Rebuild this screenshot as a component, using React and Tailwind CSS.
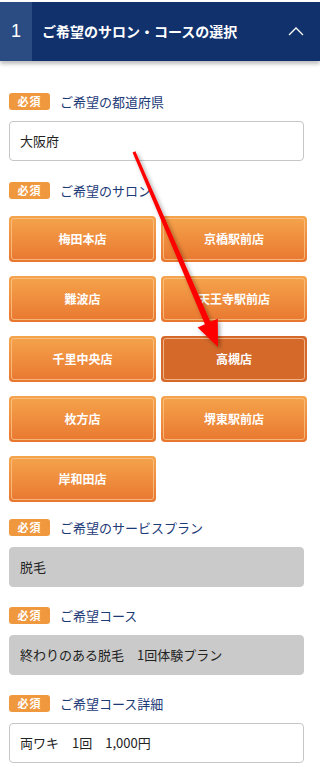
const salons = ['梅田本店', '京橋駅前店', '難波店', '天王寺駅前店', '千里中央店', '高槻店', '枚方店', '堺東駅前店', '岸和田店'];

function Label({ children }) {
  return (
    <div className="flex items-center h-[17px] mb-[11px]">
      <span className="w-[41px] h-[17px] rounded-[3px] bg-[#f0983e] text-white text-[11px] font-bold flex items-center justify-center tracking-[1px]">必須</span>
      <span className="ml-[10px] text-[13px] text-[#1d3a78]">{children}</span>
    </div>
  );
}

function Field({ value, gray }) {
  return (
    <div className={`h-[40px] w-[295px] rounded-[4px] border flex items-center px-[10px] text-[13px] text-[#222] ${gray ? 'bg-[#cacaca] border-[#cacaca]' : 'bg-white border-[#c6c6c6]'}`}>
      {value}
    </div>
  );
}

export default function App() {
  return (
    <div className="relative w-[320px] h-[767px] bg-white overflow-hidden" style={{ fontFamily: '"Noto Sans CJK JP", "Noto Sans", sans-serif' }}>
      <div className="mt-[2px] h-[59px] flex bg-[#11316d] shadow-[0_3px_4px_rgba(0,0,0,0.25)]">
        <div className="w-[32px] bg-[#2b4c83] flex items-center justify-center text-white text-[18px] font-['Liberation_Sans']">1</div>
        <div className="flex-1 flex items-center pl-[10px] text-white text-[14px] font-bold">ご希望のサロン・コースの選択</div>
        <div className="w-[24px] flex items-center mr-[8px]">
          <svg width="16" height="9" viewBox="0 0 16 9" fill="none">
            <polyline points="1,8 8,1 15,8" stroke="#fff" strokeWidth="1.3" />
          </svg>
        </div>
      </div>

      <div className="pl-[9px] pt-[32px]">
        <Label>ご希望の都道府県</Label>
        <Field value="大阪府" />

        <div className="mt-[21px]">
          <Label>ご希望のサロン</Label>
        </div>
        <div className="mt-[17px] grid grid-cols-[147px_146px] gap-x-[5px] gap-y-[14px]">
          {salons.map((s) => {
            const active = s === '高槻店';
            return (
              <div
                key={s}
                className={`h-[46px] rounded-[4px] p-[2px] ${active ? 'bg-[#d4692a]' : 'bg-gradient-to-b from-[#f5a44c] to-[#e8772f]'}`}
              >
                <div className={`h-full rounded-[3px] border flex items-center justify-center text-white text-[12px] font-bold ${active ? 'border-[#f0b48a]' : 'border-[#f8c48c]/80'}`}>
                  {s}
                </div>
              </div>
            );
          })}
        </div>

        <div className="mt-[17px]">
          <Label>ご希望のサービスプラン</Label>
        </div>
        <Field value="脱毛" gray />

        <div className="mt-[20px]">
          <Label>ご希望コース</Label>
        </div>
        <Field value="終わりのある脱毛　1回体験プラン" gray />

        <div className="mt-[20px]">
          <Label>ご希望コース詳細</Label>
        </div>
        <Field value="両ワキ　1回　1,000円" />
      </div>

      <svg className="absolute left-0 top-0 pointer-events-none" width="320" height="767" viewBox="0 0 320 767">
        <defs>
          <filter id="sh" x="-20%" y="-20%" width="140%" height="140%">
            <feDropShadow dx="2" dy="2" stdDeviation="2" floodColor="#000" floodOpacity="0.35" />
          </filter>
        </defs>
        <polygon
          filter="url(#sh)"
          fill="#ff0000"
          points="132.6,152.5 135.4,151.2 210.4,321.8 217.8,318.7 218,347 197.6,327.5 204.9,324.3"
        />
      </svg>
    </div>
  );
}
